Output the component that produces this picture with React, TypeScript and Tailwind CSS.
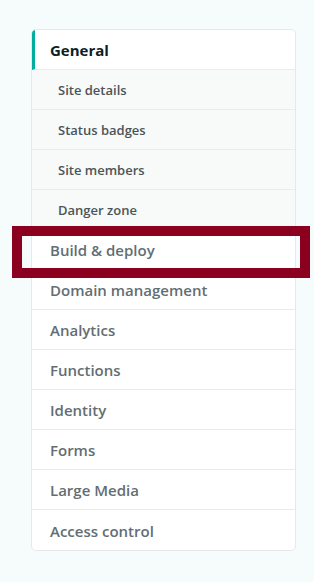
import React from "react";

const sub = ["Site details", "Status badges", "Site members", "Danger zone"];
const main = [
  "Build & deploy",
  "Domain management",
  "Analytics",
  "Functions",
  "Identity",
  "Forms",
  "Large Media",
  "Access control",
];

export default function App() {
  return (
    <div
      className="w-[314px] h-[582px] bg-[#f6fbfb] pt-[29px] pl-[31px] relative"
      style={{ fontFamily: '"Open Sans", "Noto Sans", sans-serif' }}
    >
      <div className="w-[265px] bg-white border border-[#e6e9ea] rounded-[5px] overflow-hidden">
        <div className="h-[40px] flex items-center pt-[2px] pl-[15px] border-l-[3px] border-[#00ad9f] text-[15px] font-bold text-[#0e1e25] border-b border-b-[#e9ebec]">
          General
        </div>
        {sub.map((s) => (
          <div
            key={s}
            className="h-[40px] flex items-center pt-[2px] pl-[26px] bg-[#f8f9f9] border-b border-[#e9ebec] text-[13px] font-semibold text-[#4a555a]"
          >
            {s}
          </div>
        ))}
        {main.map((m, i) => (
          <div
            key={m}
            className={
              "h-[40px] flex items-center pt-[2px] pl-[18px] text-[15px] font-semibold text-[#636e73] " +
              (i < main.length - 1 ? "border-b border-[#e9ebec]" : "")
            }
          >
            {m}
          </div>
        ))}
      </div>
      <div className="absolute left-[12px] top-[226px] w-[298px] h-[52px] border-[10px] border-[#8b001f]" />
    </div>
  );
}
